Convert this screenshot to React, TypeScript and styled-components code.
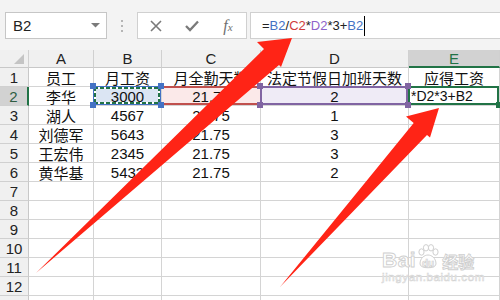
import styled, { createGlobalStyle } from 'styled-components';

const GlobalStyle = createGlobalStyle`
  html, body {
    margin: 0;
    padding: 0;
    background: #fff;
  }
  body {
    width: 500px;
    height: 300px;
    overflow: hidden;
    font-family: 'Liberation Sans', 'Noto Sans CJK SC', sans-serif;
  }
`;

const GREEN = '#217346';
const BLUE = '#4472c4';
const RED = '#c0504d';
const PURPLE = '#8064a2';

const Page = styled.div`
  position: relative;
  width: 500px;
  height: 300px;
  overflow: hidden;
  background: #fff;
`;

/* ---------- formula bar ---------- */

const Toolbar = styled.div`
  height: 50px;
  box-sizing: border-box;
  padding: 12px 0 11px 5px;
  display: flex;
  background: #f3f3f3;
`;

const NameBox = styled.div`
  width: 102px;
  box-sizing: border-box;
  background: #fff;
  border: 1px solid #c6c6c6;
  display: flex;
  align-items: center;
  padding: 0 6px 0 7px;
  font-size: 15px;
  color: #222;
`;

const DropArrow = styled.svg`
  margin-left: auto;
`;

const Grip = styled.div`
  width: 30px;
  display: flex;
  flex-direction: column;
  align-items: center;
  justify-content: center;
  gap: 3px;
`;

const GripDot = styled.span`
  width: 2px;
  height: 2px;
  background: #b5b5b5;
`;

const FuncBox = styled.div`
  width: 110px;
  box-sizing: border-box;
  background: #fff;
  border: 1px solid #d0d0d0;
  display: flex;
  align-items: center;
`;

const FuncSlot = styled.div`
  width: 36px;
  display: flex;
  justify-content: center;
  align-items: center;
  color: #777;
`;

const Fx = styled.span`
  font-family: 'Liberation Serif', serif;
  font-style: italic;
  font-size: 16px;
  color: #6f6f6f;

  small {
    font-size: 11px;
  }
`;

const FormulaBox = styled.div`
  flex: 1;
  margin-left: 3px;
  box-sizing: border-box;
  background: #fff;
  border: 1px solid #d0d0d0;
  border-right: none;
  display: flex;
  align-items: center;
  padding-left: 11px;
  font-size: 13px;
  color: #222;
  white-space: pre;
`;

const Ref = styled.span<{ $color: string }>`
  color: ${p => p.$color};
`;

const Caret = styled.span`
  width: 1px;
  height: 20px;
  background: #000;
  margin-left: 1px;
`;

/* ---------- sheet ---------- */

const Sheet = styled.div`
  display: grid;
  grid-template-columns: 29px 65px 68px 99px 148px 91px;
  grid-template-rows: 18px repeat(13, 19px);
`;

const Corner = styled.div`
  position: relative;
  box-sizing: border-box;
  background: #f0f0f0;
  border-right: 1px solid #d0d0d0;
  border-bottom: 1px solid #c8c8c8;

  &::after {
    content: '';
    position: absolute;
    right: 4px;
    bottom: 3px;
    border-left: 10px solid transparent;
    border-bottom: 10px solid #c4c4c4;
  }
`;

const ColHead = styled.div<{ $active?: boolean }>`
  box-sizing: border-box;
  background: ${p => (p.$active ? '#d2d2d2' : '#f0f0f0')};
  border-right: 1px solid #d0d0d0;
  border-bottom: ${p => (p.$active ? `2px solid ${GREEN}` : '1px solid #c8c8c8')};
  color: ${p => (p.$active ? GREEN : '#222')};
  display: flex;
  align-items: center;
  justify-content: center;
  font-size: 15px;
  padding-top: ${p => (p.$active ? '1px' : '0')};
`;

const RowHead = styled.div<{ $active?: boolean }>`
  box-sizing: border-box;
  background: ${p => (p.$active ? '#d2d2d2' : '#f0f0f0')};
  border-right: ${p => (p.$active ? `2px solid ${GREEN}` : '1px solid #c8c8c8')};
  border-bottom: 1px solid #d0d0d0;
  color: ${p => (p.$active ? '#2f5d42' : '#222')};
  display: flex;
  align-items: center;
  justify-content: center;
  font-size: 15px;
`;

const Cell = styled.div<{ $fill?: string; $left?: boolean }>`
  position: relative;
  box-sizing: border-box;
  border-right: 1px solid #d4d4d4;
  border-bottom: 1px solid #d4d4d4;
  background: ${p => p.$fill ?? '#fff'};
  display: flex;
  align-items: center;
  justify-content: ${p => (p.$left ? 'flex-start' : 'center')};
  padding-left: ${p => (p.$left ? '2px' : '0')};
  font-size: ${p => (p.$left ? '14px' : '15px')};
  color: #111;
  white-space: nowrap;
`;

const CellText = styled.span`
  position: relative;
  z-index: 2;
`;

const Frame = styled.div<{ $color: string; $band?: boolean }>`
  position: absolute;
  top: -1px;
  left: -1px;
  right: 0;
  bottom: 0;
  border: 2px solid ${p => p.$color};
  ${p => (p.$band ? 'border-left: none; border-right: none; left: 0; right: -1px;' : '')}
  z-index: 3;
`;

const CopyFrame = styled.div`
  position: absolute;
  top: -1px;
  left: -1px;
  right: 0;
  bottom: 0;
  border: 1px solid ${BLUE};
  z-index: 1;
`;

const dashH = `repeating-linear-gradient(90deg, ${GREEN} 0 4px, #fff 4px 6px)`;
const dashV = `repeating-linear-gradient(180deg, ${GREEN} 0 4px, #fff 4px 6px)`;

const Ants = styled.div`
  position: absolute;
  inset: 0;
  background:
    ${dashH} top left / 100% 2px no-repeat,
    ${dashH} bottom left / 100% 2px no-repeat,
    ${dashV} top left / 2px 100% no-repeat,
    ${dashV} top right / 2px 100% no-repeat,
    #dbe5f3;
`;

const Handle = styled.span<{ $color: string; $x: 'left' | 'right'; $y: 'top' | 'bottom' }>`
  position: absolute;
  width: 6px;
  height: 6px;
  background: ${p => p.$color};
  ${p => p.$x}: ${p => (p.$x === 'left' ? '-4px' : '-3px')};
  ${p => p.$y}: ${p => (p.$y === 'top' ? '-4px' : '-3px')};
  z-index: 4;
`;

/* ---------- overlays ---------- */

const ArrowLayer = styled.svg`
  position: absolute;
  left: 0;
  top: 0;
  z-index: 10;
  pointer-events: none;
`;

const Watermark = styled.div`
  position: absolute;
  left: 382px;
  top: 244px;
  z-index: 5;
  display: flex;
  flex-direction: column;
  gap: 1px;
  color: #fff;
  -webkit-text-stroke: 0.9px #cfcfcf;
`;

const MarkLine = styled.div`
  display: flex;
  align-items: flex-end;
  gap: 1px;
`;

const MarkBig = styled.span`
  font-family: 'Liberation Sans', sans-serif;
  font-weight: bold;
  font-size: 21px;
  line-height: 20px;
  letter-spacing: 0.5px;
`;

const MarkCn = styled.span`
  font-family: 'Noto Sans CJK SC', sans-serif;
  font-weight: bold;
  font-size: 16px;
  line-height: 17px;
  margin-left: 2px;
`;

const MarkUrl = styled.span`
  font-family: 'Liberation Sans', sans-serif;
  font-size: 11.5px;
  letter-spacing: 0.6px;
  -webkit-text-stroke: 0.6px #d4d4d4;
`;

const cols = ['A', 'B', 'C', 'D', 'E'];

const data: string[][] = [
  ['员工', '月工资', '月全勤天数', '法定节假日加班天数', '应得工资'],
  ['李华', '3000', '21.75', '2', '*D2*3+B2'],
  ['湖人', '4567', '21.75', '1', ''],
  ['刘德军', '5643', '21.75', '3', ''],
  ['王宏伟', '2345', '21.75', '3', ''],
  ['黄华基', '5432', '21.75', '2', ''],
];

function Corners({ color }: { color: string }) {
  return (
    <>
      <Handle $color={color} $x="left" $y="top" />
      <Handle $color={color} $x="right" $y="top" />
      <Handle $color={color} $x="left" $y="bottom" />
      <Handle $color={color} $x="right" $y="bottom" />
    </>
  );
}

function renderCell(r: number, c: number, text: string) {
  const key = `${r}-${c}`;
  if (r === 1 && c === 1) {
    return (
      <Cell key={key}>
        <CopyFrame>
          <Ants />
        </CopyFrame>
        <Corners color={BLUE} />
        <CellText>{text}</CellText>
      </Cell>
    );
  }
  if (r === 1 && c === 2) {
    return (
      <Cell key={key} $fill="#fbe9e9">
        <Frame $color={RED} $band />
        <CellText>{text}</CellText>
      </Cell>
    );
  }
  if (r === 1 && c === 3) {
    return (
      <Cell key={key} $fill="#efebf6">
        <Frame $color={PURPLE} />
        <Corners color={PURPLE} />
        <CellText>{text}</CellText>
      </Cell>
    );
  }
  if (r === 1 && c === 4) {
    return (
      <Cell key={key} $left>
        <Frame $color={GREEN} />
        <Handle $color={GREEN} $x="right" $y="bottom" />
        <CellText>{text}</CellText>
      </Cell>
    );
  }
  return <Cell key={key}>{text}</Cell>;
}

export default function App() {
  const rows = Array.from({ length: 13 }, (_, i) => data[i] ?? ['', '', '', '', '']);

  return (
    <Page>
      <GlobalStyle />
      <Toolbar>
        <NameBox>
          B2
          <DropArrow width="9" height="5" viewBox="0 0 9 5">
            <polygon points="0,0 9,0 4.5,4.5" fill="#7a7a7a" />
          </DropArrow>
        </NameBox>
        <Grip>
          <GripDot />
          <GripDot />
          <GripDot />
        </Grip>
        <FuncBox>
          <FuncSlot>
            <svg width="12" height="12" viewBox="0 0 12 12">
              <path d="M1 1 L11 11 M11 1 L1 11" stroke="#7a7a7a" strokeWidth="1.6" fill="none" />
            </svg>
          </FuncSlot>
          <FuncSlot>
            <svg width="14" height="12" viewBox="0 0 14 12">
              <path d="M1 6 L5 10 L13 1.5" stroke="#7a7a7a" strokeWidth="2.3" fill="none" />
            </svg>
          </FuncSlot>
          <FuncSlot>
            <Fx>
              f<small>x</small>
            </Fx>
          </FuncSlot>
        </FuncBox>
        <FormulaBox>
          =<Ref $color={BLUE}>B2</Ref>/<Ref $color="#d03c3c">C2</Ref>*
          <Ref $color="#8e63c9">D2</Ref>*3+<Ref $color={BLUE}>B2</Ref>
          <Caret />
        </FormulaBox>
      </Toolbar>

      <Sheet>
        <Corner />
        {cols.map(c => (
          <ColHead key={c} $active={c === 'E'}>
            {c}
          </ColHead>
        ))}
        {rows.map((row, r) => [
          <RowHead key={`h${r}`} $active={r === 1}>
            {r < 12 ? r + 1 : ''}
          </RowHead>,
          ...row.map((text, c) => renderCell(r, c, text)),
        ])}
      </Sheet>

      <Watermark>
        <MarkLine>
          <MarkBig>Bai</MarkBig>
          <svg width="22" height="26" viewBox="0 0 22 26">
            <g fill="#fff" stroke="#cfcfcf" strokeWidth="1">
              <ellipse cx="4.5" cy="8" rx="2.6" ry="3.2" />
              <ellipse cx="9" cy="3.8" rx="2.6" ry="3.2" />
              <ellipse cx="14" cy="3.8" rx="2.6" ry="3.2" />
              <ellipse cx="18.5" cy="8" rx="2.6" ry="3.2" />
              <path d="M3 20 C3 14 7.5 11 11 11 C14.5 11 19 14 19 20 C19 25 3 25 3 20 Z" />
            </g>
            <text x="11" y="22.5" textAnchor="middle" fontFamily="Liberation Sans" fontWeight="bold" fontSize="10" fill="#fff" stroke="#cfcfcf" strokeWidth="0.7">
              du
            </text>
          </svg>
          <MarkCn>经验</MarkCn>
        </MarkLine>
        <MarkUrl>jingyan.baidu.com</MarkUrl>
      </Watermark>

      <ArrowLayer width="500" height="300" viewBox="0 0 500 300">
        <polygon points="36,273 264,49 257,42 292,38 281,67 279,65" fill="#ff2416" />
        <polygon points="280,287 413.7,123 406,116.5 439,108 430,137.5 427,135" fill="#ff2416" />
      </ArrowLayer>
    </Page>
  );
}
